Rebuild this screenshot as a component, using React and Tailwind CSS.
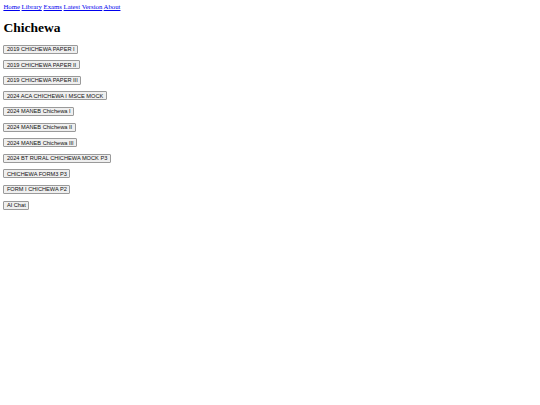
import React from "react";

const papers = [
  "2019 CHICHEWA PAPER I",
  "2019 CHICHEWA PAPER II",
  "2019 CHICHEWA PAPER III",
  "2024 ACA CHICHEWA I MSCE MOCK",
  "2024 MANEB Chichewa I",
  "2024 MANEB Chichewa II",
  "2024 MANEB Chichewa III",
  "2024 BT RURAL CHICHEWA MOCK P3",
  "CHICHEWA FORM3 P3",
  "FORM I CHICHEWA P2",
  "AI Chat",
];

const links = ["Home", "Library", "Exams", "Latest Version", "About"];

export default function App() {
  return (
    <div className="min-h-[405px] w-[540px] bg-white p-[3.4px] text-black font-['Liberation_Serif',serif]">
      <nav className="text-[6.75px] leading-[7.8px]">
        {links.map((l, i) => (
          <React.Fragment key={l}>
            <a href="#" className="text-[#0000ee] underline">
              {l}
            </a>
            {i < links.length - 1 ? " " : null}
          </React.Fragment>
        ))}
      </nav>
      <h1 className="my-[9px] text-[13.5px] leading-[15.5px] font-bold">Chichewa</h1>
      <div className="flex flex-col items-start gap-[6.6px]">
        {papers.map((p) => (
          <button
            key={p}
            className="rounded-[1px] border border-[#9a9a9a] bg-[#efefef] px-[2.5px] py-[0.25px] text-[5.65px] leading-[6.5px] text-[#111] font-['Liberation_Sans',Arial,sans-serif]"
          >
            {p}
          </button>
        ))}
      </div>
    </div>
  );
}
